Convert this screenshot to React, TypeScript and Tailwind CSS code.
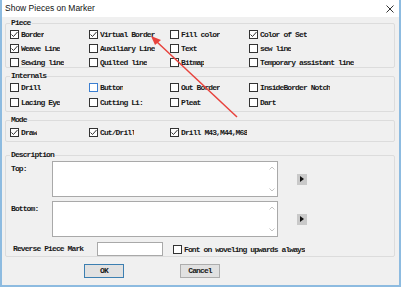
import React from 'react';

const mono = { fontFamily: '"Liberation Mono", "DejaVu Sans Mono", monospace' };

const Box: React.FC<{ checked?: boolean; focus?: boolean }> = ({ checked, focus }) => (
  <span
    className={`w-[9px] h-[9px] shrink-0 bg-white border ${focus ? 'border-[#3c7fd1]' : 'border-[#333333]'} flex items-center justify-center`}
  >
    {checked && (
      <svg width="7" height="7" viewBox="0 0 7 7">
        <polyline points="0.5,3.5 2.5,5.5 6.5,1" fill="none" stroke="#333" strokeWidth="1" />
      </svg>
    )}
  </span>
);

const Check: React.FC<{ label: string; checked?: boolean; focus?: boolean; clip?: string }> = ({
  label,
  checked,
  focus,
  clip,
}) => (
  <div className="flex items-center h-[9px] gap-[2px]">
    <Box checked={checked} focus={focus} />
    <span
      className={`text-[8px] leading-[9px] tracking-[-0.9px] font-bold text-[#1a1a1a] whitespace-nowrap overflow-hidden ${clip ?? ''}`}
      style={mono}
    >
      {label}
    </span>
  </div>
);

const Group: React.FC<{ title: string; className?: string; children: React.ReactNode }> = ({
  title,
  className,
  children,
}) => (
  <fieldset className={`ml-[3px] mr-[4px] border border-[#dcdcdc] rounded-[2px] ${className ?? ''}`}>
    <legend
      className="ml-[4px] px-[1px] text-[8px] leading-[8px] tracking-[-0.9px] font-bold text-[#1a1a1a]"
      style={mono}
    >
      {title}
    </legend>
    {children}
  </fieldset>
);

const TextBox: React.FC = () => (
  <div className="w-[226px] h-[36px] bg-white border border-[#a9a9a9] flex justify-end">
    <div className="w-[10px] flex flex-col items-center justify-between py-[4px]">
      <svg width="6" height="4" viewBox="0 0 6 4">
        <polyline points="0.5,3.5 3,1 5.5,3.5" fill="none" stroke="#c4c4c4" strokeWidth="1" />
      </svg>
      <svg width="6" height="4" viewBox="0 0 6 4">
        <polyline points="0.5,0.5 3,3 5.5,0.5" fill="none" stroke="#c4c4c4" strokeWidth="1" />
      </svg>
    </div>
  </div>
);

const SideBtn: React.FC = () => (
  <div className="w-[10px] h-[11px] bg-[#c9c9c9] flex items-center justify-center ml-[19px]">
    <svg width="4" height="6" viewBox="0 0 4 6">
      <polygon points="0,0 4,3 0,6" fill="#111" />
    </svg>
  </div>
);

const lbl = 'text-[8px] leading-[8px] tracking-[-0.9px] font-bold text-[#1a1a1a]';

const App: React.FC = () => {
  return (
    <div className="w-[401px] h-[287px] relative bg-[#f0f0f0] border-x-2 border-b-2 border-[#8dbbe0] overflow-hidden">
      {/* title bar */}
      <div className="h-[17px] bg-white flex items-center justify-between pl-[3px] pr-[5px]">
        <span
          className="text-[8.5px] text-[#111]"
          style={{ fontFamily: '"Liberation Sans", Arial, sans-serif' }}
        >
          Show Pieces on Marker
        </span>
        <svg width="8" height="8" viewBox="0 0 8 8">
          <path d="M0.5 0.5 L7.5 7.5 M7.5 0.5 L0.5 7.5" stroke="#333" strokeWidth="1" />
        </svg>
      </div>

      <Group title="Piece" className="mt-[2px]">
        <div className="grid grid-cols-[79px_81px_79px_1fr] gap-y-[5px] pl-[4px] pt-[3px]">
          <Check label="Border" checked />
          <Check label="Virtual Border" checked />
          <Check label="Fill color" />
          <Check label="Color of Set" checked />
          <Check label="Weave Line" checked />
          <Check label="Auxiliary Line" />
          <Check label="Text" />
          <Check label="sew line" />
          <Check label="Sewing line" />
          <Check label="Quilted line" />
          <Check label="Bitmap" />
          <Check label="Temporary assistant line" />
        </div>
      </Group>

      <Group title="Internals" className="mt-[4px]">
        <div className="grid grid-cols-[79px_81px_79px_1fr] gap-y-[6px] pl-[4px] pt-[3px] pb-[4px]">
          <Check label="Drill" />
          <Check label="Button" focus />
          <Check label="Out Border" />
          <Check label="InsideBorder Notch" />
          <Check label="Lacing Eye" />
          <Check label="Cutting Li:" />
          <Check label="Pleat" />
          <Check label="Dart" />
        </div>
      </Group>

      <Group title="Mode" className="mt-[4px]">
        <div className="grid grid-cols-[79px_81px_1fr] pl-[4px] pt-[4px] pb-[4px]">
          <Check label="Draw" checked />
          <Check label="Cut/Drill" checked clip="w-[34px]" />
          <Check label="Drill M43,M44,M68" checked />
        </div>
      </Group>

      <Group title="Description" className="mt-[9px]">
        <div className="flex flex-col pl-[5px] pt-[2px]" style={mono}>
          <div className="flex items-start">
            <span className={`w-[41px] pt-[4px] ${lbl}`}>Top:</span>
            <TextBox />
            <div className="self-center">
              <SideBtn />
            </div>
          </div>
          <div className="flex items-start mt-[4px]">
            <span className={`w-[41px] pt-[4px] ${lbl}`}>Bottom:</span>
            <TextBox />
            <div className="self-center">
              <SideBtn />
            </div>
          </div>
          <div className="flex items-center mt-[5px] h-[14px]">
            <span className={`w-[86px] pl-[2px] ${lbl}`}>Reverse Piece Mark</span>
            <div className="w-[66px] h-[14px] bg-white border border-[#a9a9a9]" />
            <div className="ml-[10px]">
              <Check label="Font on woveling upwards always" />
            </div>
          </div>
        </div>
      </Group>

      {/* buttons */}
      <div className="flex mt-[7px] ml-[82px] gap-[56px]" style={mono}>
        <button className={`w-[40px] h-[14px] bg-[#e1e1e1] border border-[#3c7fb1] ${lbl}`}>OK</button>
        <button className={`w-[40px] h-[14px] bg-[#e1e1e1] border border-[#adadad] ${lbl}`}>Cancel</button>
      </div>

      {/* red annotation arrow */}
      <svg className="absolute left-[-2px] top-0 pointer-events-none" width="401" height="287" viewBox="0 0 401 287">
        <line x1="237" y1="117" x2="156" y2="41" stroke="#e8423c" strokeWidth="1.5" />
        <polygon points="151,36 161,40 155,45" fill="#e8423c" />
      </svg>
    </div>
  );
};

export default App;
